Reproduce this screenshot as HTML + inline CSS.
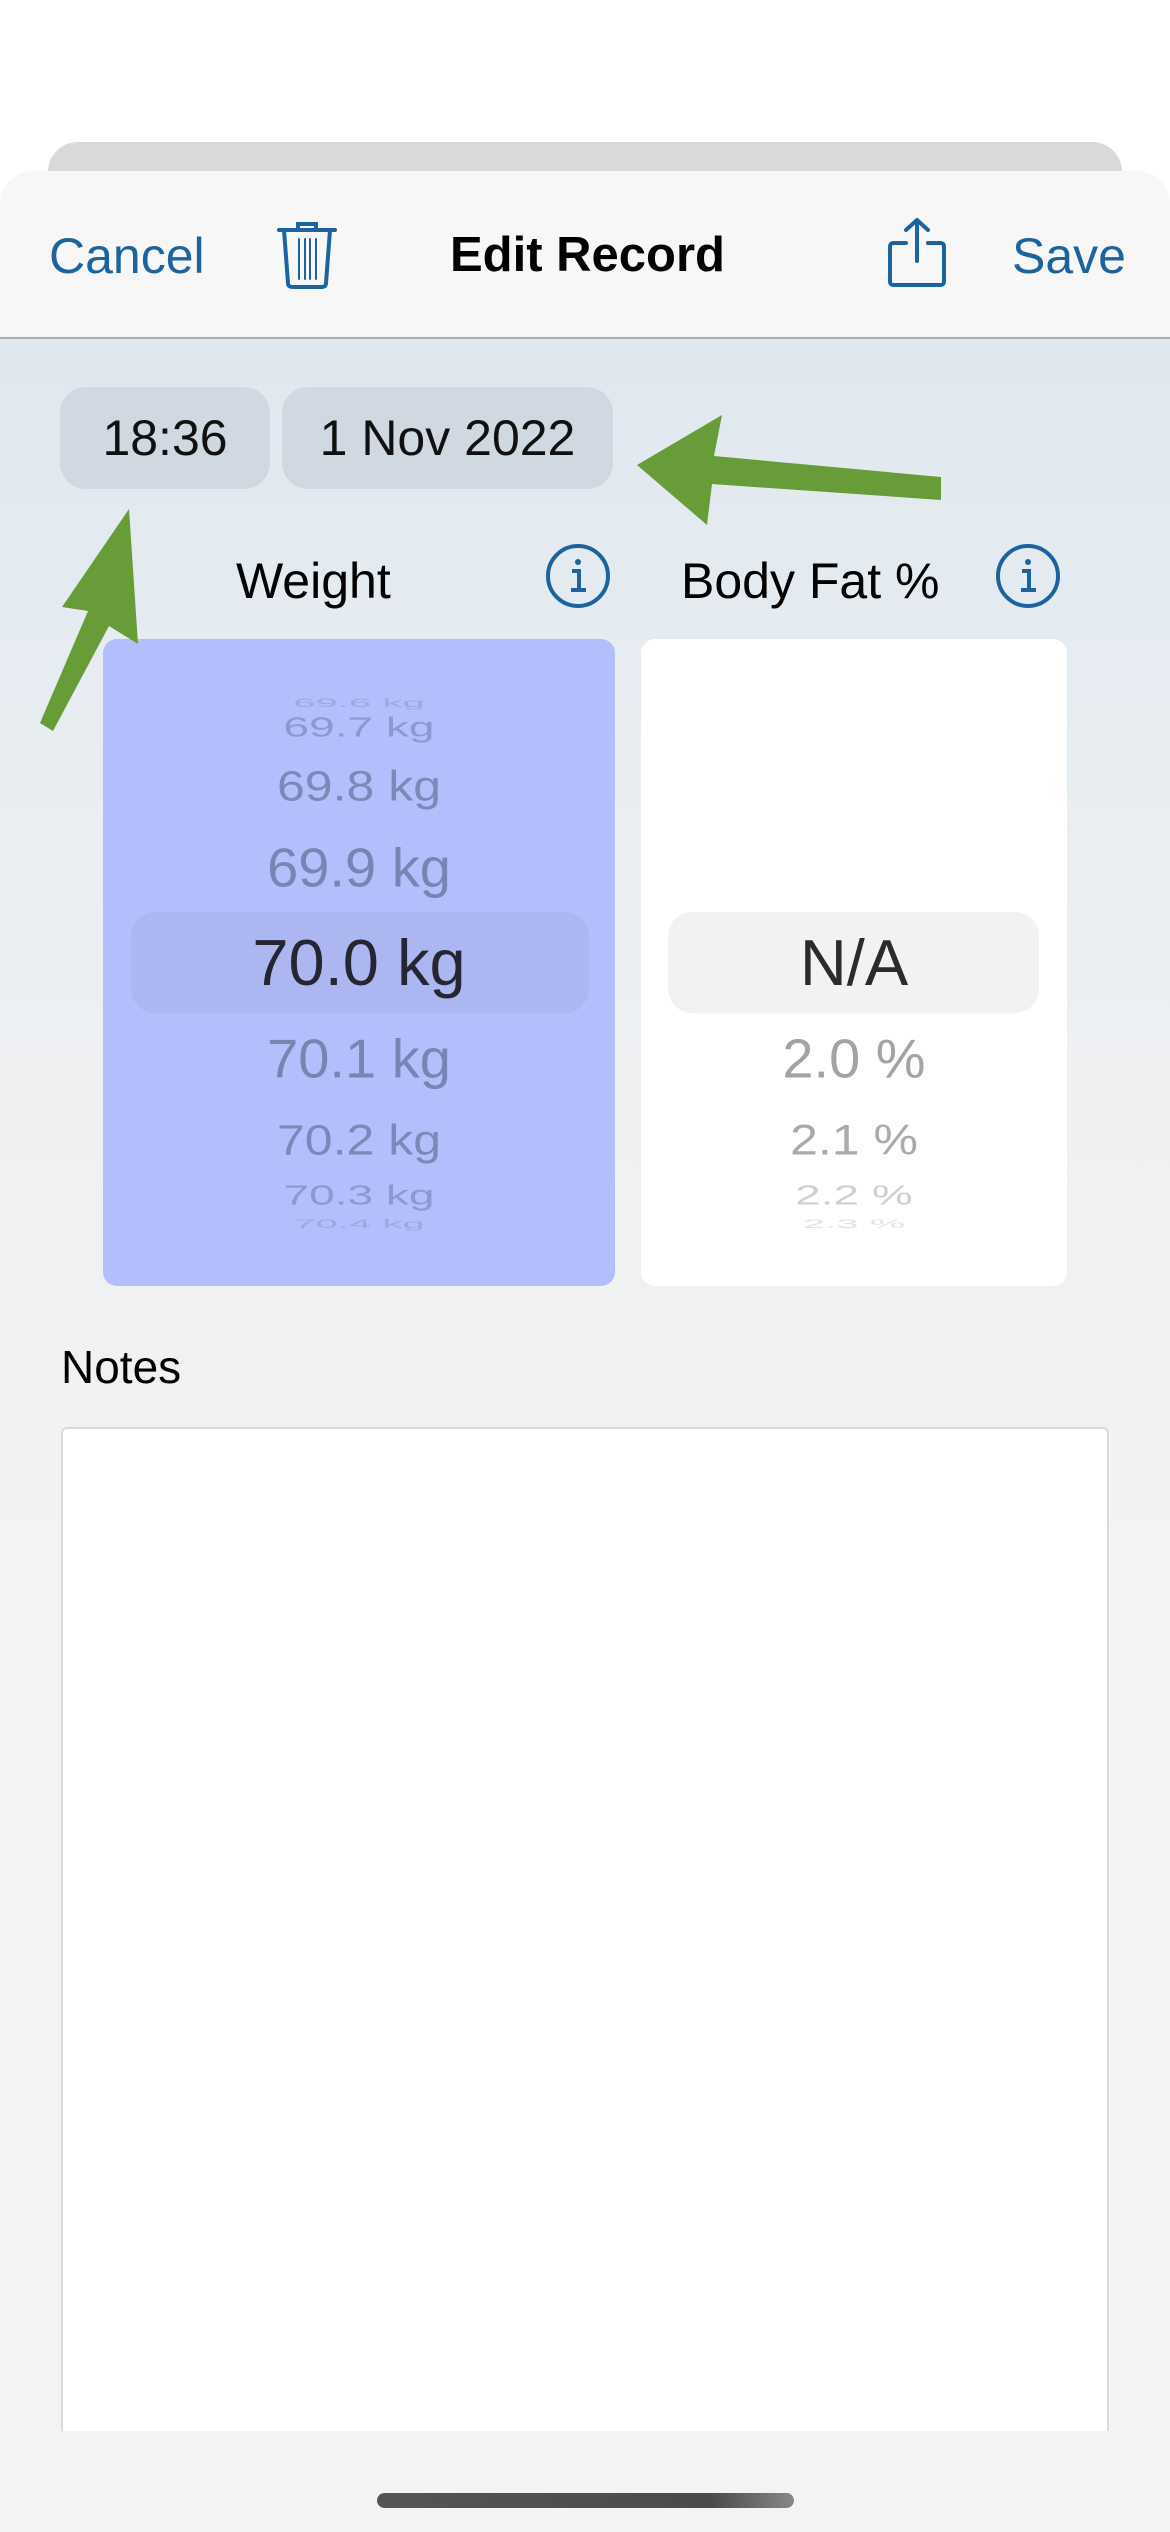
<!DOCTYPE html>
<html><head><meta charset="utf-8">
<style>
*{margin:0;padding:0;box-sizing:border-box}
html,body{width:1170px;height:2532px;overflow:hidden;background:#fff;font-family:"Liberation Sans",sans-serif}
.abs{position:absolute}
#bar{left:48px;top:142px;width:1074px;height:60px;background:#d9d9d9;border-radius:30px 30px 0 0}
#sheet{left:0;top:171px;width:1170px;height:2361px;border-radius:34px 34px 0 0;overflow:hidden;background:linear-gradient(180deg,#dce6ee 0px,#e6ecf1 500px,#eef0f2 900px,#f2f3f3 1400px,#f2f3f3 100%)}
#nav{left:0;top:0;width:1170px;height:168px;background:#f7f7f7;border-bottom:2px solid #a9adb1}
.blue{color:#1c64a0}
.t{white-space:nowrap;line-height:1}
.pill{background:#d0d9e1;border-radius:26px;display:flex;align-items:center;justify-content:center;font-size:50px;color:#111}
.pk{font-family:"Liberation Sans",sans-serif;white-space:nowrap;text-align:center;line-height:1;transform-origin:center}
</style></head><body>
<div class="abs" id="bar"></div>
<div class="abs" id="sheet">
 <div class="abs" id="nav">
  <div class="abs t blue" style="left:49px;top:60px;font-size:50px">Cancel</div>
  <svg class="abs" style="left:276px;top:48px" width="62" height="70" viewBox="0 0 62 70" fill="none" stroke="#1c64a0" stroke-width="4" stroke-linecap="round">
   <path d="M22 11V5h18v6"/><path d="M3 11h56"/><path d="M8 11l4 53c0 3 2 4 4 4h30c2 0 4-1 4-4l4-53"/>
   <path d="M23 20v40M29 20v40M34 20v40M40 20v40" stroke-width="2"/>
  </svg>
  <div class="abs t" style="left:450px;top:60px;font-size:49px;font-weight:bold;color:#000">Edit Record</div>
  <svg class="abs" style="left:886px;top:46px" width="62" height="72" viewBox="0 0 62 72" fill="none" stroke="#1c64a0" stroke-width="4" stroke-linecap="round" stroke-linejoin="round">
   <path d="M31 44V3M20 13L31 3l11 10"/><path d="M20 26H8c-3 0-4 1-4 4v34c0 3 1 4 4 4h46c3 0 4-1 4-4V30c0-3-1-4-4-4H42"/>
  </svg>
  <div class="abs t blue" style="left:1012px;top:60px;font-size:50px">Save</div>
 </div>
 <div class="abs pill" style="left:60px;top:216px;width:210px;height:102px">18:36</div>
 <div class="abs pill" style="left:282px;top:216px;width:331px;height:102px">1 Nov 2022</div>
 <div class="abs t" style="left:236px;top:385px;font-size:50px;color:#000">Weight</div>
 <div class="abs t" style="left:681px;top:385px;font-size:50px;color:#000">Body Fat %</div>
 <svg class="abs" style="left:544px;top:371px" width="68" height="68" viewBox="0 0 68 68" fill="none" stroke="#1c64a0" stroke-width="4"><circle cx="34" cy="34" r="30"/><circle cx="34" cy="20" r="3" fill="#1c64a0" stroke="none"/><path d="M28 29h7v18M27 48h15"/></svg>
 <svg class="abs" style="left:994px;top:371px" width="68" height="68" viewBox="0 0 68 68" fill="none" stroke="#1c64a0" stroke-width="4"><circle cx="34" cy="34" r="30"/><circle cx="34" cy="20" r="3" fill="#1c64a0" stroke="none"/><path d="M28 29h7v18M27 48h15"/></svg>

 <div class="abs" style="left:103px;top:468px;width:512px;height:647px;background:#b3bffc;border-radius:14px">
  <div class="abs" style="left:28px;top:273px;width:458px;height:101px;background:#acb7f2;border-radius:24px"></div>
 </div>
 <div class="abs" style="left:641px;top:468px;width:426px;height:647px;background:#fff;border-radius:14px">
  <div class="abs" style="left:27px;top:273px;width:371px;height:101px;background:#f2f2f2;border-radius:24px"></div>
 </div>
 <div class="abs pk" style="left:103px;width:512px;top:512px;font-size:40px;color:#9ea8de;transform:scaleY(.3)">69.6 kg</div>
 <div class="abs pk" style="left:103px;width:512px;top:533px;font-size:46px;color:#8e98cc;transform:scaleY(.6)">69.7 kg</div>
 <div class="abs pk" style="left:103px;width:512px;top:590px;font-size:50px;color:#7d87b8;transform:scaleY(.85)">69.8 kg</div>
 <div class="abs pk" style="left:103px;width:512px;top:669px;font-size:56px;color:#7a84b2;transform:scaleY(.97)">69.9 kg</div>
 <div class="abs pk" style="left:103px;width:512px;top:759px;font-size:65px;color:#262632">70.0 kg</div>
 <div class="abs pk" style="left:103px;width:512px;top:860px;font-size:56px;color:#7a84b2;transform:scaleY(.97)">70.1 kg</div>
 <div class="abs pk" style="left:103px;width:512px;top:944px;font-size:50px;color:#7d87b8;transform:scaleY(.85)">70.2 kg</div>
 <div class="abs pk" style="left:103px;width:512px;top:1001px;font-size:46px;color:#8e98cc;transform:scaleY(.6)">70.3 kg</div>
 <div class="abs pk" style="left:103px;width:512px;top:1033px;font-size:40px;color:#9ea8de;transform:scaleY(.3)">70.4 kg</div>
 <div class="abs pk" style="left:641px;width:426px;top:759px;font-size:65px;color:#2b2b2b">N/A</div>
 <div class="abs pk" style="left:641px;width:426px;top:860px;font-size:56px;color:#a3a3a3;transform:scaleY(.97)">2.0 %</div>
 <div class="abs pk" style="left:641px;width:426px;top:944px;font-size:50px;color:#aaaaaa;transform:scaleY(.85)">2.1 %</div>
 <div class="abs pk" style="left:641px;width:426px;top:1001px;font-size:46px;color:#cfcfcf;transform:scaleY(.6)">2.2 %</div>
 <div class="abs pk" style="left:641px;width:426px;top:1033px;font-size:40px;color:#e2e2e2;transform:scaleY(.3)">2.3 %</div>

 <div class="abs t" style="left:61px;top:1173px;font-size:46px;color:#000">Notes</div>
 <div class="abs" style="left:61px;top:1256px;width:1048px;height:1004px;background:#fff;border:2px solid #dadada;border-bottom:none;border-radius:6px 6px 0 0"></div>
 <div class="abs" style="left:377px;top:2322px;width:417px;height:15px;border-radius:8px;background:linear-gradient(90deg,#555,#4a4a4a 80%,#888)"></div>

 <svg class="abs" style="left:0;top:0" width="1170" height="800">
  <g fill="#679c38">
   <polygon points="637,294 722,244 714,285 941,306 941,329 712,313 707,354"/>
   <polygon points="129,338 138,473 109,455 53,560 40,552 88,440 62,436"/>
  </g>
 </svg>
</div>
</body></html>
